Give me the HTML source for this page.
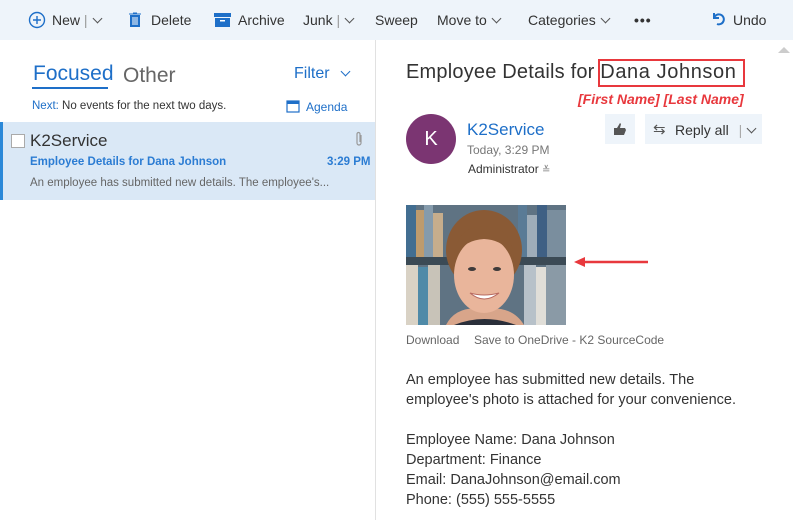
<!DOCTYPE html>
<html><head><meta charset="utf-8"><style>
*{margin:0;padding:0;box-sizing:border-box}
body{width:793px;height:520px;overflow:hidden;background:#fff;font-family:"Liberation Sans",sans-serif;color:#333;position:relative}
.a{position:absolute;white-space:nowrap}
.tb{position:absolute;left:0;top:0;width:793px;height:40px;background:#eef4fa}
.tb .a{top:12px;font-size:14px;color:#333}
.chev{display:inline-block;width:7px;height:7px;border-right:1.5px solid #555;border-bottom:1.5px solid #555;transform:rotate(45deg);margin-left:6px;position:relative;top:-3px}
</style></head><body>
<div class="tb">
<svg class="a" style="left:28px;top:11px" width="18" height="18" viewBox="0 0 18 18"><circle cx="9" cy="9" r="7.5" fill="none" stroke="#1e6fc8" stroke-width="1.4"/><path d="M9 5v8M5 9h8" stroke="#1e6fc8" stroke-width="1.4"/></svg>
<div class="a" style="left:52px">New <span style="color:#999">|</span><span class="chev"></span></div>
<svg class="a" style="left:128px;top:12px" width="14" height="16" viewBox="0 0 14 16"><path d="M1 2h12M5 1h4M2.5 3.5h9v11h-9z" fill="#1e6fc8" stroke="#1e6fc8"/><path d="M5 5v8M7 5v8M9 5v8" stroke="#fff"/></svg>
<div class="a" style="left:151px">Delete</div>
<svg class="a" style="left:214px;top:13px" width="17" height="14" viewBox="0 0 17 14"><rect x="0" y="0" width="17" height="4" fill="#1e6fc8"/><rect x="1" y="5" width="15" height="9" fill="#1e6fc8"/><rect x="6" y="7" width="5" height="1.5" fill="#fff"/></svg>
<div class="a" style="left:238px">Archive</div>
<div class="a" style="left:303px">Junk <span style="color:#999">|</span><span class="chev"></span></div>
<div class="a" style="left:375px">Sweep</div>
<div class="a" style="left:437px">Move to<span class="chev"></span></div>
<div class="a" style="left:528px">Categories<span class="chev"></span></div>
<div class="a" style="left:634px;font-weight:bold;letter-spacing:1px">•••</div>
<svg class="a" style="left:711px;top:12px" width="14" height="14" viewBox="0 0 14 14"><path d="M3 1v5h5M3 6a5 5 0 1 1 3 6" fill="none" stroke="#1e6fc8" stroke-width="2"/></svg>
<div class="a" style="left:733px">Undo</div>
</div>
<div class="a" style="left:375px;top:40px;width:1px;height:480px;background:#e1e1e1"></div>
<div class="a" style="left:33px;top:62px;font-size:21px;color:#1e6fc8">Focused</div>
<div class="a" style="left:32px;top:87px;width:76px;height:2px;background:#1e6fc8"></div>
<div class="a" style="left:123px;top:64px;font-size:21px;color:#666">Other</div>
<div class="a" style="left:294px;top:65px;font-size:16px;color:#1e6fc8">Filter<span class="chev" style="border-color:#1e6fc8;margin-left:12px"></span></div>
<div class="a" style="left:32px;top:100px;font-size:11.5px;color:#333"><span style="color:#1e6fc8">Next:</span> No events for the next two days.</div>
<svg class="a" style="left:286px;top:99px" width="14" height="14" viewBox="0 0 14 14"><rect x="1" y="2" width="12" height="11" fill="none" stroke="#1e6fc8" stroke-width="1.2"/><rect x="1" y="2" width="12" height="3" fill="#1e6fc8"/></svg>
<div class="a" style="left:306px;top:100px;font-size:12px;color:#1e6fc8">Agenda</div>
<div class="a" style="left:0;top:122px;width:375px;height:78px;background:#dae8f6;border-left:3px solid #2b88d8"></div>
<div class="a" style="left:11px;top:134px;width:14px;height:14px;border:1px solid #aaa;background:#fff"></div>
<div class="a" style="left:30px;top:131px;font-size:17px;color:#333">K2Service</div>
<svg class="a" style="left:354px;top:131px" width="10" height="16" viewBox="0 0 10 16"><path d="M7 4v8a2 2 0 0 1-4 0V3a1.5 1.5 0 0 1 3 0v8" fill="none" stroke="#999" stroke-width="1.2"/></svg>
<div class="a" style="left:30px;top:156px;font-size:11.5px;font-weight:bold;color:#2b7cd3">Employee Details for Dana Johnson</div>
<div class="a" style="left:327px;top:156px;font-size:11.5px;font-weight:bold;color:#2b7cd3">3:29 PM</div>
<div class="a" style="left:30px;top:177px;font-size:11.5px;color:#666">An employee has submitted new details. The employee's...</div>
<div class="a" style="left:778px;top:47px;width:0;height:0;border-left:6px solid transparent;border-right:6px solid transparent;border-bottom:6px solid #ccc"></div>
<div class="a" style="left:406px;top:61px;font-size:20px;color:#333;letter-spacing:0.2px">Employee Details for <span style="letter-spacing:0.6px">Dana Johnson</span></div>
<div class="a" style="left:598px;top:59px;width:147px;height:28px;border:2px solid #e8383d"></div>
<div class="a" style="left:578px;top:91px;font-size:14px;color:#e8383d;font-weight:bold;font-style:italic">[First Name] [Last Name]</div>
<div class="a" style="left:406px;top:114px;width:50px;height:50px;border-radius:50%;background:#7b3572;color:#fff;font-size:20px;text-align:center;line-height:50px">K</div>
<div class="a" style="left:467px;top:120px;font-size:17px;color:#1e6fc8">K2Service</div>
<div class="a" style="left:467px;top:143px;font-size:12px;color:#777">Today, 3:29 PM</div>
<div class="a" style="left:468px;top:162px;font-size:12px;color:#333">Administrator <span style="color:#777;font-size:10px">≚</span></div>
<div class="a" style="left:605px;top:114px;width:30px;height:30px;background:#eef4fa"></div>
<svg class="a" style="left:612px;top:121px" width="16" height="16" viewBox="0 0 16 16"><path d="M2 7h3v7H2zM5 7l3-5 1 1-1 4h5l1 2-2 5H5z" fill="#555"/></svg>
<div class="a" style="left:645px;top:114px;width:117px;height:30px;background:#eef4fa"></div>
<div class="a" style="left:653px;top:120px;font-size:15px;color:#555">⇆</div>
<div class="a" style="left:675px;top:122px;font-size:14px;color:#333">Reply all <span style="color:#aaa;margin-left:6px">|</span><span class="chev"></span></div>
<svg class="a" style="left:406px;top:205px" width="160" height="120" viewBox="0 0 160 120">
<rect width="160" height="120" fill="#5f7383"/>
<g opacity=".9"><rect x="0" y="0" width="10" height="55" fill="#3f6e93"/><rect x="10" y="5" width="8" height="50" fill="#c9a06b"/><rect x="18" y="0" width="9" height="55" fill="#8aa0b1"/><rect x="27" y="8" width="10" height="47" fill="#d2b48d"/><rect x="112" y="0" width="9" height="55" fill="#5a7c99"/><rect x="121" y="10" width="10" height="45" fill="#a6b4bf"/><rect x="131" y="0" width="10" height="55" fill="#3c5f85"/><rect x="141" y="5" width="19" height="50" fill="#7d92a2"/></g>
<rect x="0" y="52" width="160" height="8" fill="#3b4a55"/>
<g><rect x="0" y="60" width="12" height="60" fill="#d9d2c5"/><rect x="12" y="62" width="10" height="58" fill="#4f8aa8"/><rect x="22" y="60" width="12" height="60" fill="#c8c3b8"/><rect x="118" y="60" width="12" height="60" fill="#b7c1c9"/><rect x="130" y="62" width="10" height="58" fill="#e0ded8"/><rect x="140" y="60" width="20" height="60" fill="#8a9aa6"/></g>
<ellipse cx="78" cy="45" rx="38" ry="40" fill="#8a5a35"/>
<path d="M40 120 Q50 100 78 104 Q106 100 118 120z" fill="#d8a58a"/>
<path d="M48 120 Q78 108 110 120z" fill="#2a2f3a"/>
<ellipse cx="78" cy="70" rx="30" ry="38" fill="#e9b59b"/>
<path d="M48 55 Q50 20 78 22 Q106 20 108 55 Q100 35 78 34 Q56 35 48 55z" fill="#8a5a35"/>
<ellipse cx="66" cy="64" rx="4" ry="2" fill="#3e3a3a"/><ellipse cx="91" cy="64" rx="4" ry="2" fill="#3e3a3a"/>
<path d="M64 88 Q78 100 93 88 Q78 92 64 88z" fill="#fff" stroke="#b86a60"/>
</svg>
<svg class="a" style="left:574px;top:256px" width="76" height="12" viewBox="0 0 76 12"><path d="M10 6h64" stroke="#e8383d" stroke-width="2.5"/><path d="M0 6l11-5v10z" fill="#e8383d"/></svg>
<div class="a" style="left:406px;top:333px;font-size:12px;color:#666">Download</div>
<div class="a" style="left:474px;top:333px;font-size:12px;color:#666">Save to OneDrive - K2 SourceCode</div>
<div class="a" style="left:406px;top:370px;font-size:14.5px;color:#333;line-height:20px">An employee has submitted new details. The<br>employee's photo is attached for your convenience.<br><br>Employee Name: Dana Johnson<br>Department: Finance<br>Email: DanaJohnson@email.com<br>Phone: (555) 555-5555</div>
</body></html>
